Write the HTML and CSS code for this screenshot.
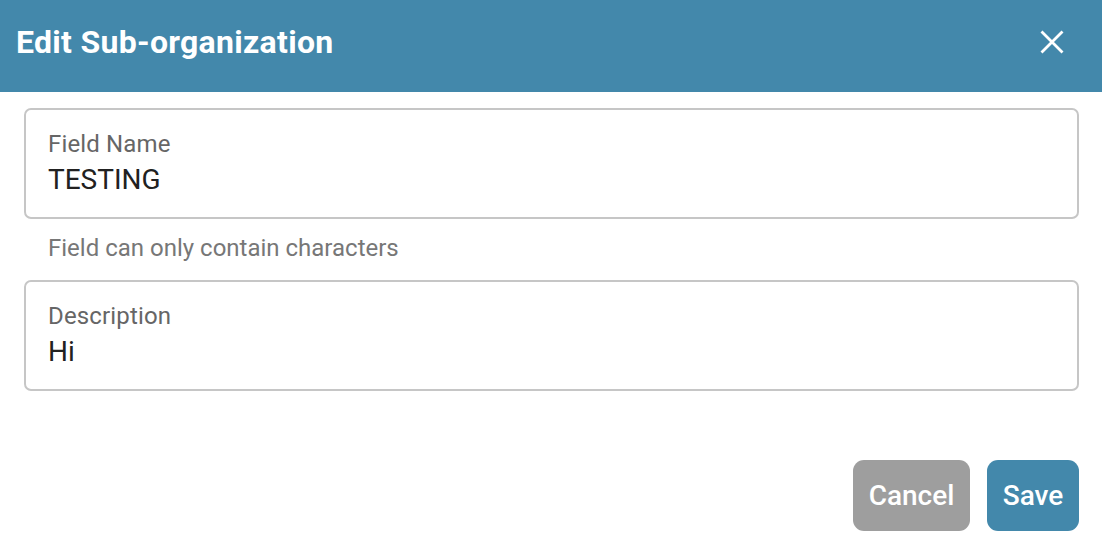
FILE: index.html
```html
<!DOCTYPE html>
<html>
<head>
<meta charset="utf-8">
<link rel="stylesheet" href="styles.css">
</head>
<body>
<div class="dialog">
  <header class="header">
    <h1 class="title">Edit Sub-organization</h1>
    <button class="close" aria-label="Close">
      <svg width="24" height="24" viewBox="0 0 24 24"><path d="M1.5 1.5L22.5 22.5M22.5 1.5L1.5 22.5" stroke="#fff" stroke-width="2.8" fill="none"/></svg>
    </button>
  </header>
  <div class="content">
    <div class="field">
      <div class="label">Field Name</div>
      <div class="value">TESTING</div>
    </div>
    <div class="helper">Field can only contain characters</div>
    <div class="field">
      <div class="label">Description</div>
      <div class="value">Hi</div>
    </div>
  </div>
  <div class="actions">
    <button class="btn cancel">Cancel</button>
    <button class="btn save">Save</button>
  </div>
</div>
</body>
</html>
```
FILE: styles.css
```css
* { box-sizing: border-box; }
html, body { margin: 0; padding: 0; background: #fff; }
body { font-family: Roboto, "Liberation Sans", sans-serif; width: 1102px; height: 544px; overflow: hidden; }
.header {
  height: 92px;
  background: #4388ab;
  display: flex;
  align-items: flex-start;
  justify-content: space-between;
  padding: 23px 38px 0 16px;
}
.title { margin: 0; color: #fff; font-size: 32px; line-height: 38px; font-weight: 700; letter-spacing: 0.3px; }
.close { background: none; border: 0; padding: 0; display: flex; margin-top: 7px; }
.content { padding: 16px 23px 0 24px; }
.field {
  height: 111px;
  border: 2px solid #c6c6c6;
  border-radius: 7px;
  padding: 20px 22px 0;
}
.label { font-size: 24px; color: #666; line-height: 28px; letter-spacing: 0.15px; }
.value { font-size: 28px; color: #212121; line-height: 34px; margin-top: 5px; }
.helper { font-size: 24px; color: #777; padding: 15px 24px 18px; line-height: 28px; }
.actions { display: flex; justify-content: flex-end; gap: 17px; padding: 69px 23px 0 0; }
.btn {
  height: 71px;
  border: 0;
  border-radius: 11px;
  color: #fff;
  font-family: Roboto, sans-serif;
  font-size: 28px;
  font-weight: 500;
  padding: 0;
}
.cancel { background: #9e9e9e; width: 117px; }
.save { background: #4388ab; width: 92px; }
```
